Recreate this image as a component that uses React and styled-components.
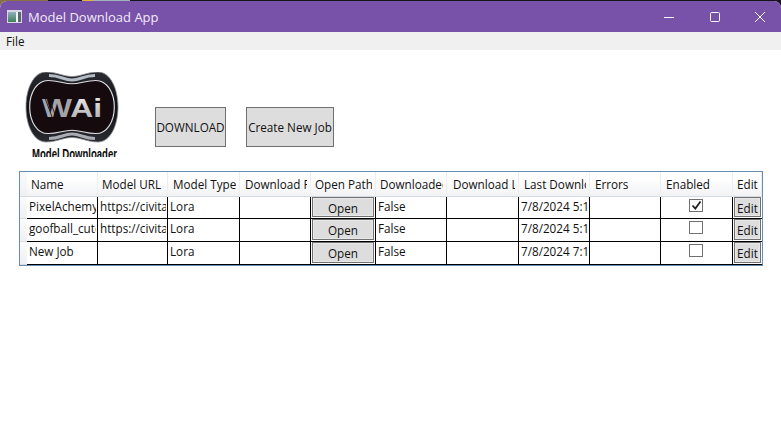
import React from "react";
import styled, { createGlobalStyle } from "styled-components";

const GlobalStyle = createGlobalStyle`
  html, body {
    margin: 0;
    height: 100%;
    overflow: hidden;
    background: #15121a;
  }
  #root {
    height: 100%;
  }
`;

const COLUMNS = "7px 71px 70px 72px 71px 65px 71px 72px 71px 71px 72px 29px";

const Desktop = styled.div`
  height: 100%;
  padding-top: 1px;
  box-sizing: border-box;
  background: linear-gradient(
    90deg,
    #8a6f45 0 48px,
    #17131a 48px 82px,
    #e5b53c 82px 93px,
    #9fb3b8 93px 130px,
    #17131a 130px
  );
`;

const Window = styled.div`
  height: 100%;
  display: flex;
  flex-direction: column;
  background: #fff;
  border-radius: 7px 7px 0 0;
  overflow: hidden;
  font-family: "Open Sans", "Liberation Sans", sans-serif;
  font-size: 11.7px;
  color: #111;
`;

const TitleBar = styled.header`
  height: 31px;
  flex: none;
  display: flex;
  align-items: center;
  padding: 0 16px 0 7px;
  background: #7851a9;
  color: #f1ecf7;
`;

const TitleText = styled.span`
  margin-left: 6px;
  flex: 1;
  font-size: 13px;
`;

const WindowControls = styled.div`
  display: flex;
  gap: 35.5px;
`;

const MenuBar = styled.nav`
  height: 18px;
  flex: none;
  display: flex;
  align-items: center;
  padding-left: 6px;
  background: #f0f0f0;
`;

const Toolbar = styled.section`
  height: 121px;
  flex: none;
  box-sizing: border-box;
  display: flex;
  align-items: flex-start;
  gap: 35px;
  padding: 22px 0 0 25px;
`;

const Actions = styled.div`
  display: flex;
  gap: 20px;
  margin-top: 35px;
`;

const ActionButton = styled.button`
  width: ${(p) => p.$width}px;
  height: 40px;
  padding: 0;
  border: 1px solid #707070;
  background: #dddddd;
  font: inherit;
  color: inherit;
  white-space: nowrap;
`;

const DataGrid = styled.div`
  margin: 0 18px 0 19px;
  border: 1px solid #688caf;
  background: #fff;
`;

const Row = styled.div`
  display: grid;
  grid-template-columns: ${COLUMNS};
  height: ${(p) => p.$height}px;
`;

const RowHeader = styled.div`
  background: linear-gradient(#fbfbfb, #eef0f2);
  border-bottom: 1px solid #d8dce0;
`;

const HeaderCell = styled.div`
  box-sizing: border-box;
  padding: 4px 3px 0 ${(p) => p.$indent}px;
  background: linear-gradient(#ffffff 0 30%, #f1f2f4);
  border-right: 1px solid #eceef0;
  border-bottom: 1px solid #d5dbe2;
`;

const Cell = styled.div`
  box-sizing: border-box;
  min-width: 0;
  padding: 1px 1px 0 2px;
  border-right: 1px solid #000;
  border-bottom: 1px solid #000;
  ${(p) => p.$last && "border-right: 0;"}
`;

// cell text stops short of the grid line, as in the WPF grid
const CellText = styled.div`
  overflow: hidden;
  white-space: nowrap;
`;

const ButtonCell = styled(Cell)`
  padding: 0 1px 1px 1px;
  display: flex;
`;

const CheckCell = styled(Cell)`
  padding: 2px 0 0 28px;
`;

const GridButton = styled.button`
  width: 100%;
  height: 100%;
  padding: 1px 0 0;
  box-sizing: border-box;
  border: 1px solid #707070;
  background: #dddddd;
  box-shadow: inset 0 0 0 1px #e8e8e8;
  font: inherit;
  color: inherit;
`;

const CheckBox = styled.span`
  display: flex;
  align-items: center;
  justify-content: center;
  width: 14px;
  height: 13px;
  box-sizing: border-box;
  border: 1px solid #707070;
  background: #fff;
`;

const HEADERS = [
  { title: "Name", indent: 4 },
  { title: "Model URL", indent: 4 },
  { title: "Model Type", indent: 5 },
  { title: "Download P", indent: 5 },
  { title: "Open Path", indent: 4 },
  { title: "Downloaded", indent: 4 },
  { title: "Download L", indent: 6 },
  { title: "Last Downlo", indent: 5 },
  { title: "Errors", indent: 5 },
  { title: "Enabled", indent: 5 },
  { title: "Edit", indent: 4 },
];

const JOBS = [
  { name: "PixelAchemy", url: "https://civitai", date: "7/8/2024 5:19", enabled: true, height: 22 },
  { name: "goofball_cute", url: "https://civitai", date: "7/8/2024 5:19", enabled: false, height: 23 },
  { name: "New Job", url: "", date: "7/8/2024 7:19", enabled: false, height: 23 },
];

function AppIcon() {
  return (
    <svg width="15" height="13" viewBox="0 0 15 13">
      <defs>
        <linearGradient id="pane" x1="0" y1="0" x2="0" y2="1">
          <stop offset="0" stopColor="#8fb0bc" />
          <stop offset="1" stopColor="#3f7f5c" />
        </linearGradient>
      </defs>
      <rect width="15" height="13" fill="#d9d6e4" />
      <rect x="1" y="2" width="8" height="10" fill="url(#pane)" />
      <rect x="9" y="2" width="2" height="10" fill="#f4f4f6" />
      <rect x="11" y="2" width="3" height="10" fill="#5d6570" />
    </svg>
  );
}

function MinimizeIcon() {
  return (
    <svg width="10" height="10" viewBox="0 0 10 10">
      <path d="M0 5.5H10" stroke="#fff" strokeWidth="1" />
    </svg>
  );
}

function MaximizeIcon() {
  return (
    <svg width="10" height="10" viewBox="0 0 10 10">
      <rect x=".5" y=".5" width="9" height="9" rx="1" fill="none" stroke="#fff" />
    </svg>
  );
}

function CloseIcon() {
  return (
    <svg width="10" height="10" viewBox="0 0 10 10">
      <path d="M0 0L10 10M10 0L0 10" stroke="#fff" strokeWidth="1" />
    </svg>
  );
}

function CheckMark() {
  return (
    <svg width="11" height="11" viewBox="0 0 11 11">
      <path d="M1.5 5.5L4.3 8.5L9.5 1.5" fill="none" stroke="#222" strokeWidth="1.8" />
    </svg>
  );
}

const PEANUT =
  "M47 4.5C56 4.5 62 0 73 0C85 0 93 16 93 35C93 54 85 70 73 70C62 70 56 65.5 47 65.5C38 65.5 32 70 21 70C9 70 1 54 1 35C1 16 9 0 21 0C32 0 38 4.5 47 4.5Z";

function Logo() {
  return (
    <svg width="95" height="85" viewBox="0 0 95 85">
      <defs>
        <linearGradient id="rim" x1="0" y1="0" x2="0" y2="1">
          <stop offset="0" stopColor="#2a2c32" />
          <stop offset="0.5" stopColor="#101014" />
          <stop offset="1" stopColor="#2a2c32" />
        </linearGradient>
        <linearGradient id="metal" x1="0" y1="0" x2="0" y2="1">
          <stop offset="0" stopColor="#f2f2f2" />
          <stop offset="1" stopColor="#a8a8aa" />
        </linearGradient>
      </defs>
      <path d={PEANUT} fill="url(#rim)" stroke="#8d9094" strokeWidth=".8" />
      <path d="M24 3.5C36 3.5 38 8 47 8C56 8 58 3.5 70 3.5" fill="none" stroke="#b4bcc6" strokeWidth="3" />
      <path d="M24 66.5C36 66.5 38 62 47 62C56 62 58 66.5 70 66.5" fill="none" stroke="#a9acb2" strokeWidth="3" />
      <path
        d={PEANUT}
        fill="#150a0d"
        stroke="#dcdcde"
        strokeWidth="1.3"
        transform="translate(47 35) scale(.92 .76) translate(-47 -35)"
      />
      <text
        x="17"
        y="45"
        textLength="60"
        lengthAdjust="spacingAndGlyphs"
        fontFamily="Liberation Sans"
        fontWeight="700"
        fontSize="26"
        fill="url(#metal)"
      >
        <tspan fill="#a4a4a8">W</tspan>Ai
      </text>
      <path d="M20 26L27 45M24 26L31 45" stroke="#150a0d" strokeWidth=".8" />
      <text
        x="7"
        y="87"
        textLength="85"
        lengthAdjust="spacingAndGlyphs"
        fontFamily="Liberation Sans"
        fontWeight="700"
        fontSize="15"
        fill="#0a0a0a"
      >
        Model Downloader
      </text>
    </svg>
  );
}

export default function App() {
  return (
    <>
      <GlobalStyle />
      <Desktop>
        <Window>
          <TitleBar>
            <AppIcon />
            <TitleText>Model Download App</TitleText>
            <WindowControls>
              <MinimizeIcon />
              <MaximizeIcon />
              <CloseIcon />
            </WindowControls>
          </TitleBar>
          <MenuBar>File</MenuBar>
          <Toolbar>
            <Logo />
            <Actions>
              <ActionButton $width={71}>DOWNLOAD</ActionButton>
              <ActionButton $width={88}>Create New Job</ActionButton>
            </Actions>
          </Toolbar>
          <DataGrid>
            <Row $height={25}>
              <RowHeader />
              {HEADERS.map((h) => (
                <HeaderCell key={h.title} $indent={h.indent}>
                  <CellText>{h.title}</CellText>
                </HeaderCell>
              ))}
            </Row>
            {JOBS.map((job) => (
              <Row key={job.name} $height={job.height}>
                <RowHeader />
                <Cell>
                  <CellText>{job.name}</CellText>
                </Cell>
                <Cell>
                  <CellText>{job.url}</CellText>
                </Cell>
                <Cell>
                  <CellText>Lora</CellText>
                </Cell>
                <Cell />
                <ButtonCell>
                  <GridButton>Open</GridButton>
                </ButtonCell>
                <Cell>
                  <CellText>False</CellText>
                </Cell>
                <Cell />
                <Cell>
                  <CellText>{job.date}</CellText>
                </Cell>
                <Cell />
                <CheckCell>
                  <CheckBox>{job.enabled && <CheckMark />}</CheckBox>
                </CheckCell>
                <ButtonCell $last>
                  <GridButton>Edit</GridButton>
                </ButtonCell>
              </Row>
            ))}
          </DataGrid>
        </Window>
      </Desktop>
    </>
  );
}
